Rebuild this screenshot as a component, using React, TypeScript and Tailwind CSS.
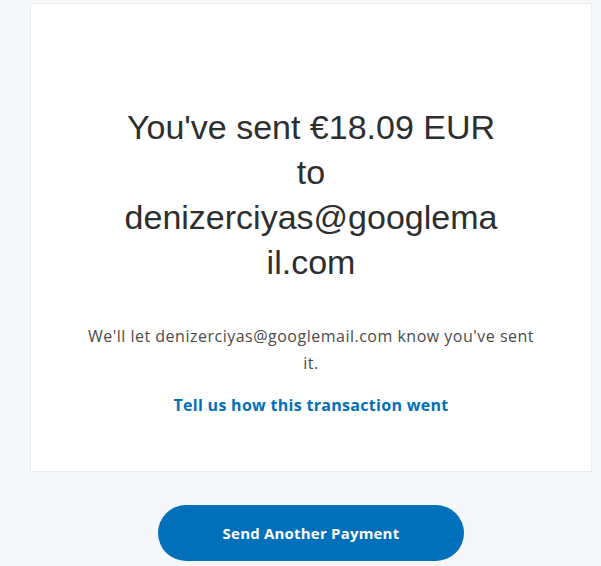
export default function App() {
  return (
    <div className="min-h-screen w-full bg-[#f5f7fa] pt-[3px]">
      {/* карточка подтверждения */}
      <div className="ml-[30px] w-[562px] h-[469px] bg-white border border-[#eaeced] flex flex-col items-center pt-[101px]">
        <h1 className="w-[376px] text-center text-[34px] leading-[45px] text-[#2c2e2f] font-['Liberation_Sans',Arial,sans-serif] font-normal [overflow-wrap:anywhere]">
          You've sent €18.09 EUR to denizerciyas@googlemail.com
        </h1>
        <p className="mt-[38px] w-[456px] text-center text-[16px] leading-[27px] tracking-[0.5px] text-[#4a4a4a] font-['Open_Sans',sans-serif]">
          We'll let denizerciyas@googlemail.com know you've sent it.
        </p>
        <a href="#" className="mt-[18px] text-[16px] leading-[20px] tracking-[0.3px] font-bold text-[#0070ba] font-['Open_Sans',sans-serif]">
          Tell us how this transaction went
        </a>
      </div>

      <div className="flex justify-center pl-[21px] mt-[33px]">
        <button className="w-[306px] h-[56px] rounded-full bg-[#0070ba] text-white text-[15px] tracking-[0.2px] font-bold font-['Open_Sans',sans-serif]">
          Send Another Payment
        </button>
      </div>
    </div>
  );
}
